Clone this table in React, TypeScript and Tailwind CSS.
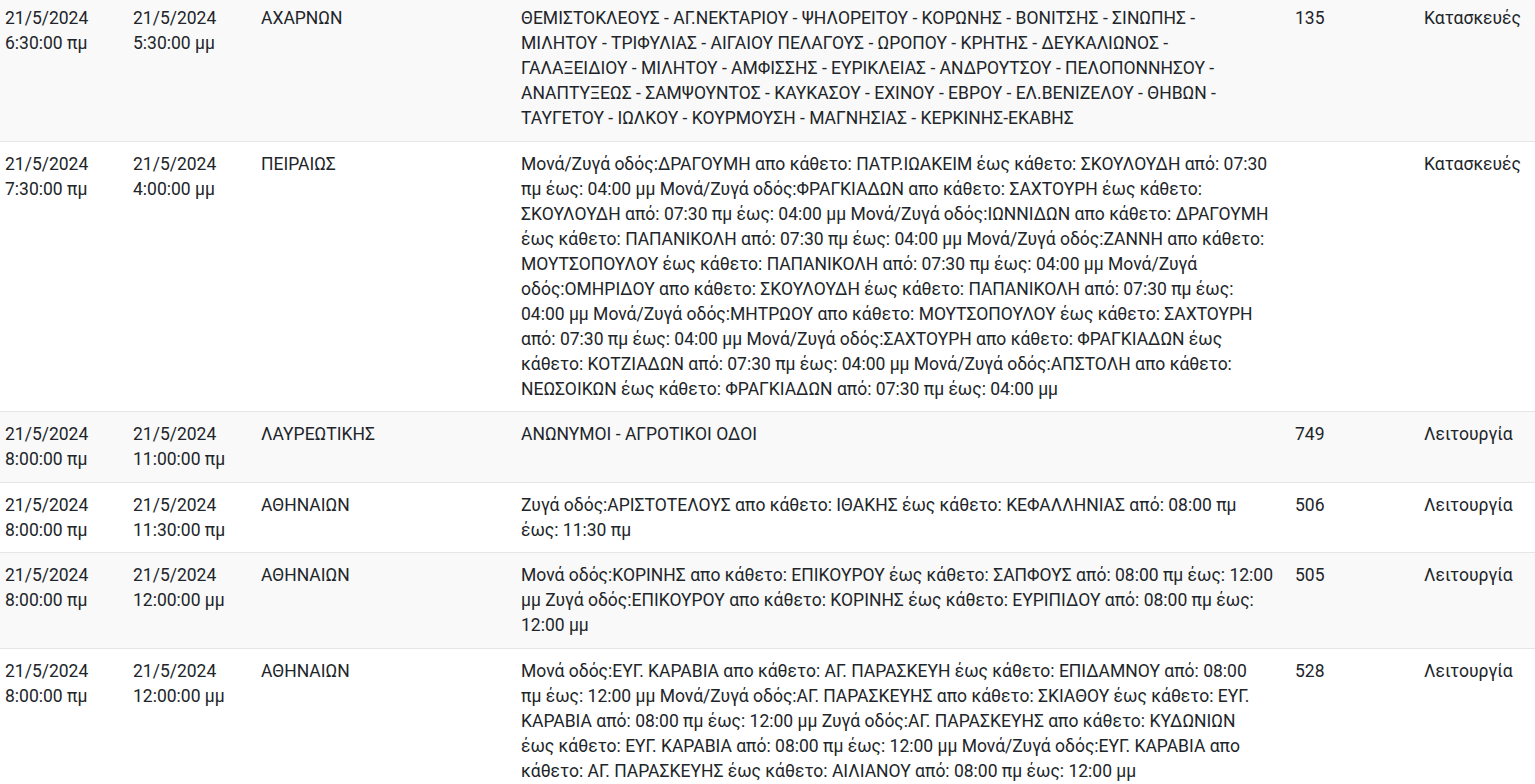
type Row = {
  from: [string, string]
  to: [string, string]
  area: string
  text: string
  code: string
  kind: string
}

const rows: Row[] = [
  {
    from: ['21/5/2024', '6:30:00 πμ'],
    to: ['21/5/2024', '5:30:00 μμ'],
    area: 'ΑΧΑΡΝΩΝ',
    text: 'ΘΕΜΙΣΤΟΚΛΕΟΥΣ - ΑΓ.ΝΕΚΤΑΡΙΟΥ - ΨΗΛΟΡΕΙΤΟΥ - ΚΟΡΩΝΗΣ - ΒΟΝΙΤΣΗΣ - ΣΙΝΩΠΗΣ - ΜΙΛΗΤΟΥ - ΤΡΙΦΥΛΙΑΣ - ΑΙΓΑΙΟΥ ΠΕΛΑΓΟΥΣ - ΩΡΟΠΟΥ - ΚΡΗΤΗΣ - ΔΕΥΚΑΛΙΩΝΟΣ - ΓΑΛΑΞΕΙΔΙΟΥ - ΜΙΛΗΤΟΥ - ΑΜΦΙΣΣΗΣ - ΕΥΡΙΚΛΕΙΑΣ - ΑΝΔΡΟΥΤΣΟΥ - ΠΕΛΟΠΟΝΝΗΣΟΥ - ΑΝΑΠΤΥΞΕΩΣ - ΣΑΜΨΟΥΝΤΟΣ - ΚΑΥΚΑΣΟΥ - ΕΧΙΝΟΥ - ΕΒΡΟΥ - ΕΛ.ΒΕΝΙΖΕΛΟΥ - ΘΗΒΩΝ - ΤΑΥΓΕΤΟΥ - ΙΩΛΚΟΥ - ΚΟΥΡΜΟΥΣΗ - ΜΑΓΝΗΣΙΑΣ - ΚΕΡΚΙΝΗΣ-ΕΚΑΒΗΣ',
    code: '135',
    kind: 'Κατασκευές',
  },
  {
    from: ['21/5/2024', '7:30:00 πμ'],
    to: ['21/5/2024', '4:00:00 μμ'],
    area: 'ΠΕΙΡΑΙΩΣ',
    text: 'Μονά/Ζυγά οδός:ΔΡΑΓΟΥΜΗ απο κάθετο: ΠΑΤΡ.ΙΩΑΚΕΙΜ έως κάθετο: ΣΚΟΥΛΟΥΔΗ από: 07:30 πμ έως: 04:00 μμ Μονά/Ζυγά οδός:ΦΡΑΓΚΙΑΔΩΝ απο κάθετο: ΣΑΧΤΟΥΡΗ έως κάθετο: ΣΚΟΥΛΟΥΔΗ από: 07:30 πμ έως: 04:00 μμ Μονά/Ζυγά οδός:ΙΩΝΝΙΔΩΝ απο κάθετο: ΔΡΑΓΟΥΜΗ έως κάθετο: ΠΑΠΑΝΙΚΟΛΗ από: 07:30 πμ έως: 04:00 μμ Μονά/Ζυγά οδός:ΖΑΝΝΗ απο κάθετο: ΜΟΥΤΣΟΠΟΥΛΟΥ έως κάθετο: ΠΑΠΑΝΙΚΟΛΗ από: 07:30 πμ έως: 04:00 μμ Μονά/Ζυγά οδός:ΟΜΗΡΙΔΟΥ απο κάθετο: ΣΚΟΥΛΟΥΔΗ έως κάθετο: ΠΑΠΑΝΙΚΟΛΗ από: 07:30 πμ έως: 04:00 μμ Μονά/Ζυγά οδός:ΜΗΤΡΩΟΥ απο κάθετο: ΜΟΥΤΣΟΠΟΥΛΟΥ έως κάθετο: ΣΑΧΤΟΥΡΗ από: 07:30 πμ έως: 04:00 μμ Μονά/Ζυγά οδός:ΣΑΧΤΟΥΡΗ απο κάθετο: ΦΡΑΓΚΙΑΔΩΝ έως κάθετο: ΚΟΤΖΙΑΔΩΝ από: 07:30 πμ έως: 04:00 μμ Μονά/Ζυγά οδός:ΑΠΣΤΟΛΗ απο κάθετο: ΝΕΩΣΟΙΚΩΝ έως κάθετο: ΦΡΑΓΚΙΑΔΩΝ από: 07:30 πμ έως: 04:00 μμ',
    code: '',
    kind: 'Κατασκευές',
  },
  {
    from: ['21/5/2024', '8:00:00 πμ'],
    to: ['21/5/2024', '11:00:00 πμ'],
    area: 'ΛΑΥΡΕΩΤΙΚΗΣ',
    text: 'ΑΝΩΝΥΜΟΙ - ΑΓΡΟΤΙΚΟΙ ΟΔΟΙ',
    code: '749',
    kind: 'Λειτουργία',
  },
  {
    from: ['21/5/2024', '8:00:00 πμ'],
    to: ['21/5/2024', '11:30:00 πμ'],
    area: 'ΑΘΗΝΑΙΩΝ',
    text: 'Ζυγά οδός:ΑΡΙΣΤΟΤΕΛΟΥΣ απο κάθετο: ΙΘΑΚΗΣ έως κάθετο: ΚΕΦΑΛΛΗΝΙΑΣ από: 08:00 πμ έως: 11:30 πμ',
    code: '506',
    kind: 'Λειτουργία',
  },
  {
    from: ['21/5/2024', '8:00:00 πμ'],
    to: ['21/5/2024', '12:00:00 μμ'],
    area: 'ΑΘΗΝΑΙΩΝ',
    text: 'Μονά οδός:ΚΟΡΙΝΗΣ απο κάθετο: ΕΠΙΚΟΥΡΟΥ έως κάθετο: ΣΑΠΦΟΥΣ από: 08:00 πμ έως: 12:00 μμ Ζυγά οδός:ΕΠΙΚΟΥΡΟΥ απο κάθετο: ΚΟΡΙΝΗΣ έως κάθετο: ΕΥΡΙΠΙΔΟΥ από: 08:00 πμ έως: 12:00 μμ',
    code: '505',
    kind: 'Λειτουργία',
  },
  {
    from: ['21/5/2024', '8:00:00 πμ'],
    to: ['21/5/2024', '12:00:00 μμ'],
    area: 'ΑΘΗΝΑΙΩΝ',
    // the source wraps a little earlier than our font does here
    text: 'Μονά οδός:ΕΥΓ. ΚΑΡΑΒΙΑ απο κάθετο: ΑΓ. ΠΑΡΑΣΚΕΥΗ έως κάθετο: ΕΠΙΔΑΜΝΟΥ από: 08:00\nπμ έως: 12:00 μμ Μονά/Ζυγά οδός:ΑΓ. ΠΑΡΑΣΚΕΥΗΣ απο κάθετο: ΣΚΙΑΘΟΥ έως κάθετο: ΕΥΓ.\nΚΑΡΑΒΙΑ από: 08:00 πμ έως: 12:00 μμ Ζυγά οδός:ΑΓ. ΠΑΡΑΣΚΕΥΗΣ απο κάθετο: ΚΥΔΩΝΙΩΝ\nέως κάθετο: ΕΥΓ. ΚΑΡΑΒΙΑ από: 08:00 πμ έως: 12:00 μμ Μονά/Ζυγά οδός:ΕΥΓ. ΚΑΡΑΒΙΑ απο\nκάθετο: ΑΓ. ΠΑΡΑΣΚΕΥΗΣ έως κάθετο: ΑΙΛΙΑΝΟΥ από: 08:00 πμ έως: 12:00 μμ',
    code: '528',
    kind: 'Λειτουργία',
  },
]

export default function App() {
  return (
    <div className="h-[784px] overflow-hidden bg-white text-[#212529] font-['Roboto',sans-serif] text-[17.5px] leading-[25px]">
      <table className="-mt-[5px] w-[1535px] table-fixed border-collapse">
        <colgroup>
          <col className="w-[128px]" />
          <col className="w-[128px]" />
          <col className="w-[260px]" />
          <col className="w-[774px]" />
          <col className="w-[129px]" />
          <col className="w-[116px]" />
        </colgroup>
        <tbody>
          {rows.map((r, i) => (
            <tr key={i} className={i % 2 === 0 ? 'bg-[#f9f9f9] border-t border-[#e6e6e6]' : 'bg-white border-t border-[#e6e6e6]'}>
              <td className="align-top pl-[5px] pr-3 pt-[10px] pb-[9.5px]">
                {r.from[0]}
                <br />
                {r.from[1]}
              </td>
              <td className="align-top pl-[5px] pr-3 pt-[10px] pb-[9.5px]">
                {r.to[0]}
                <br />
                {r.to[1]}
              </td>
              <td className="align-top pl-[5px] pr-3 pt-[10px] pb-[9.5px]">{r.area}</td>
              <td className="align-top pl-[5px] pr-[16px] pt-[10px] pb-[9.5px] whitespace-pre-line">{r.text}</td>
              <td className="align-top pl-[5px] pr-3 pt-[10px] pb-[9.5px]">{r.code}</td>
              <td className="align-top pl-[5px] pr-0 pt-[10px] pb-[9.5px] whitespace-nowrap">{r.kind}</td>
            </tr>
          ))}
        </tbody>
      </table>
    </div>
  )
}
